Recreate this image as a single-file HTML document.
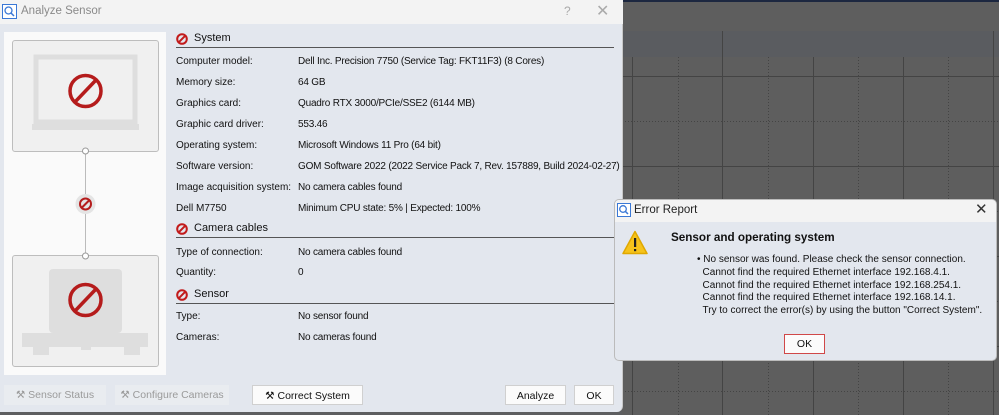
<!DOCTYPE html>
<html><head><meta charset="utf-8"><style>
*{margin:0;padding:0;box-sizing:border-box}
body{width:999px;height:415px;overflow:hidden;position:relative;background:#5d5e60;font-family:"Liberation Sans",sans-serif;font-size:10px;color:#111}
.abs{position:absolute}
#bg{left:622px;top:0;width:377px;height:415px;background:#5e5e5e}
.lbl{position:absolute;left:176px;white-space:nowrap}
.val{position:absolute;left:298px;white-space:nowrap;letter-spacing:-0.2px}
.hdr{position:absolute;left:176px;width:438px;height:16px;border-bottom:1px solid #555;font-size:11px;padding-left:18px}
.btn{position:absolute;height:20px;top:385px;text-align:center;line-height:20px;font-size:10.5px}
.dis{background:#e9ecf0;color:#9a9a9a}
.en{background:#fbfbfb;border:1px solid #d0d0d0;color:#111}
</style></head><body>
<div id="bg" class="abs"></div>
<div class="abs" style="left:622px;top:0;width:377px;height:2px;background:#1c2740"></div>
<div class="abs" style="left:622px;top:31px;width:377px;height:26px;background:#5a5c60"></div>
<svg class="abs" style="left:622px;top:0" width="377" height="415">
<g stroke="#444" stroke-width="1">
<line x1="10.5" y1="57" x2="10.5" y2="415"/><line x1="100.5" y1="31" x2="100.5" y2="415"/><line x1="191.5" y1="57" x2="191.5" y2="415"/><line x1="281.5" y1="57" x2="281.5" y2="415"/><line x1="371.5" y1="31" x2="371.5" y2="415"/>
<line x1="0" y1="76.5" x2="377" y2="76.5"/><line x1="0" y1="166.5" x2="377" y2="166.5"/><line x1="0" y1="256.5" x2="377" y2="256.5"/><line x1="0" y1="346.5" x2="377" y2="346.5"/>
</g>
<g stroke="#444" stroke-width="1" stroke-dasharray="1,2">
<line x1="56.5" y1="57" x2="56.5" y2="415"/><line x1="146.5" y1="57" x2="146.5" y2="415"/><line x1="236.5" y1="57" x2="236.5" y2="415"/><line x1="326.5" y1="57" x2="326.5" y2="415"/>
<line x1="0" y1="121.5" x2="377" y2="121.5"/><line x1="0" y1="211.5" x2="377" y2="211.5"/><line x1="0" y1="301.5" x2="377" y2="301.5"/><line x1="0" y1="391.5" x2="377" y2="391.5"/>
</g></svg>

<div class="abs" style="left:0;top:0;width:623px;height:412px;background:#e3e7ee;border-radius:0 0 6px 0;border-right:1px solid #c8c8c8"></div>
<div class="abs" style="left:0;top:0;width:623px;height:24px;background:#f3f3f3"></div>
<svg class="abs" style="left:2px;top:4px" width="15" height="15"><rect x="0.5" y="0.5" width="14" height="14" fill="#fff" stroke="#3a78d6"/><circle cx="6.5" cy="6.5" r="3.5" fill="none" stroke="#3a78d6" stroke-width="1.3"/><line x1="9" y1="9" x2="12" y2="12" stroke="#3a78d6" stroke-width="1.5"/></svg>
<div class="abs" style="left:21px;top:5px;color:#8a8a8a;font-size:11.5px">Analyze Sensor</div>
<div class="abs" style="left:564px;top:4px;color:#aaa;font-size:12px">?</div>
<div class="abs" style="left:596px;top:1px;color:#aaa;font-size:16px">✕</div>

<div class="abs" style="left:4px;top:32px;width:162px;height:343px;background:#fafafa"></div>
<div class="abs" style="left:12px;top:40px;width:147px;height:112px;background:#f0f0f0;border:1px solid #bdbdbd;border-radius:3px"></div>
<div class="abs" style="left:12px;top:255px;width:147px;height:112px;background:#f0f0f0;border:1px solid #bdbdbd;border-radius:3px"></div>
<svg class="abs" style="left:0;top:0" width="170" height="380">
<rect x="36" y="57" width="99" height="65" fill="none" stroke="#dedede" stroke-width="5"/>
<rect x="32" y="124" width="107" height="6" fill="#dedede"/>
<rect x="49" y="269" width="73" height="64" rx="4" fill="#dedede"/>
<rect x="22" y="333" width="126" height="14" fill="#dedede"/>
<rect x="33" y="345" width="16" height="10" fill="#dedede"/><rect x="81" y="345" width="10" height="5" fill="#dedede"/><rect x="124" y="345" width="16" height="10" fill="#dedede"/>
<line x1="85.5" y1="154" x2="85.5" y2="253" stroke="#bbb"/>
<circle cx="85.5" cy="151" r="3" fill="#fff" stroke="#999"/>
<circle cx="85.5" cy="256" r="3" fill="#fff" stroke="#999"/>
<circle cx="85.5" cy="204" r="10" fill="#e4e4e4"/>
<g fill="none" stroke="#b51c1c">
<circle cx="85.5" cy="91" r="15.5" stroke-width="3.5"/><line x1="96" y1="80" x2="75" y2="102" stroke-width="3.5"/>
<circle cx="85.5" cy="300" r="15.5" stroke-width="3.5"/><line x1="96" y1="289" x2="75" y2="311" stroke-width="3.5"/>
<circle cx="85.5" cy="204" r="5.5" stroke-width="2"/><line x1="89.5" y1="200" x2="81.5" y2="208" stroke-width="2"/>
</g></svg>

<svg class="abs" style="left:0;top:0" width="0" height="0"><defs><g id="nb"><circle cx="6" cy="6" r="4.8" fill="none" stroke="#c21b1b" stroke-width="2"/><line x1="9.3" y1="2.7" x2="2.7" y2="9.3" stroke="#c21b1b" stroke-width="2"/></g></defs></svg>
<div class="hdr" style="top:32px">System</div>
<svg class="abs" style="left:176px;top:33px" width="12" height="12"><use href="#nb"/></svg>
<div class="lbl" style="top:56px">Computer model:</div><div class="val" style="top:56px">Dell Inc. Precision 7750 (Service Tag: FKT11F3) (8 Cores)</div>
<div class="lbl" style="top:77px">Memory size:</div><div class="val" style="top:77px">64 GB</div>
<div class="lbl" style="top:98px">Graphics card:</div><div class="val" style="top:98px">Quadro RTX 3000/PCIe/SSE2 (6144 MB)</div>
<div class="lbl" style="top:119px">Graphic card driver:</div><div class="val" style="top:119px">553.46</div>
<div class="lbl" style="top:140px">Operating system:</div><div class="val" style="top:140px">Microsoft Windows 11 Pro (64 bit)</div>
<div class="lbl" style="top:161px">Software version:</div><div class="val" style="top:161px">GOM Software 2022 (2022 Service Pack 7, Rev. 157889, Build 2024-02-27)</div>
<div class="lbl" style="top:182px">Image acquisition system:</div><div class="val" style="top:182px">No camera cables found</div>
<div class="lbl" style="top:203px">Dell M7750</div><div class="val" style="top:203px">Minimum CPU state: 5% | Expected: 100%</div>
<div class="hdr" style="top:222px">Camera cables</div>
<svg class="abs" style="left:176px;top:223px" width="12" height="12"><use href="#nb"/></svg>
<div class="lbl" style="top:247px">Type of connection:</div><div class="val" style="top:247px">No camera cables found</div>
<div class="lbl" style="top:267px">Quantity:</div><div class="val" style="top:267px">0</div>
<div class="hdr" style="top:288px">Sensor</div>
<svg class="abs" style="left:176px;top:289px" width="12" height="12"><use href="#nb"/></svg>
<div class="lbl" style="top:311px">Type:</div><div class="val" style="top:311px">No sensor found</div>
<div class="lbl" style="top:332px">Cameras:</div><div class="val" style="top:332px">No cameras found</div>

<div class="btn dis" style="left:4px;width:102px">⚒ Sensor Status</div>
<div class="btn dis" style="left:115px;width:114px">⚒ Configure Cameras</div>
<div class="btn en" style="left:252px;width:111px">⚒ Correct System</div>
<div class="btn en" style="left:505px;width:61px">Analyze</div>
<div class="btn en" style="left:574px;width:40px">OK</div>

<div class="abs" style="left:614px;top:199px;width:383px;height:162px;background:#e3e7ee;border:1px solid #bbb;border-radius:5px;overflow:hidden">
<div style="height:22px;background:#f3f3f3"></div></div>
<svg class="abs" style="left:617px;top:203px" width="14" height="14"><rect x="0.5" y="0.5" width="13" height="13" fill="#fff" stroke="#3a78d6"/><circle cx="6" cy="6" r="3.3" fill="none" stroke="#3a78d6" stroke-width="1.3"/><line x1="8.3" y1="8.3" x2="11" y2="11" stroke="#3a78d6" stroke-width="1.5"/></svg>
<div class="abs" style="left:634px;top:204px;font-size:11.5px;color:#222">Error Report</div>
<div class="abs" style="left:975px;top:200px;font-size:15px;color:#333">✕</div>
<svg class="abs" style="left:622px;top:230px" width="26" height="25"><path d="M13 1.5 L25 23.5 L1 23.5 Z" fill="#f6c31b" stroke="#e0a800" stroke-linejoin="round" stroke-width="1.5"/><rect x="12" y="8" width="2.2" height="9" fill="#222"/><rect x="12" y="19" width="2.2" height="2.2" fill="#222"/></svg>
<div class="abs" style="left:671px;top:231px;font-weight:bold;font-size:11.7px">Sensor and operating system</div>
<div class="abs" style="left:697px;top:254px;line-height:12.8px;font-size:10px;white-space:nowrap">• No sensor was found. Please check the sensor connection.<br>&nbsp;&nbsp;Cannot find the required Ethernet interface 192.168.4.1.<br>&nbsp;&nbsp;Cannot find the required Ethernet interface 192.168.254.1.<br>&nbsp;&nbsp;Cannot find the required Ethernet interface 192.168.14.1.<br>&nbsp;&nbsp;Try to correct the error(s) by using the button "Correct System".</div>
<div class="abs" style="left:784px;top:334px;width:41px;height:20px;background:#fbfbfb;border:1px solid #d04848;text-align:center;line-height:18px;font-size:10.5px">OK</div>
</body></html>
